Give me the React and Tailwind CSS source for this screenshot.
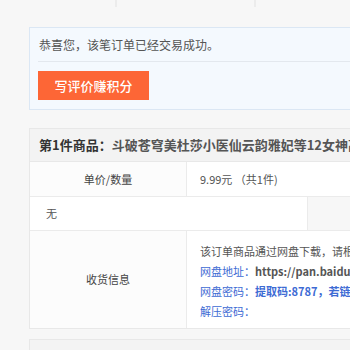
export default function App() {
  const font = { fontFamily: '"Microsoft YaHei", "Noto Sans CJK SC", "Noto Sans", sans-serif' };
  return (
    <div className="w-[350px] h-[350px] overflow-hidden bg-[#f7f7f7] text-[#555]" style={font}>
      <div className="flex h-[7px]">
        <div className="w-[117px] border-r-2 border-[#ececec]" />
        <div className="w-[139px] border-r-2 border-[#ececec]" />
      </div>
      <div className="pl-[29px]">
        <div className="mt-[20px] w-[360px] border border-[#dbe7f4] bg-[#f4f9fe] px-[8px] pb-[9px]">
          <div className="h-[34px] flex items-center pl-[1px] border-b border-[#e3e8ee] text-[12px] text-[#555]">
            恭喜您，该笔订单已经交易成功。
          </div>
          <div className="mt-[9px] w-[111px] h-[29px] bg-[#fd6636] text-white text-[13px] font-medium flex items-center justify-center">
            写评价赚积分
          </div>
        </div>

        <div className="mt-[18px] w-[360px] border border-[#e8e8e8] bg-[#f7f7f7]">
          <div className="h-[33px] bg-[#f3f3f3] border-b border-[#e8e8e8] flex items-center pl-[9px] text-[13px] font-bold whitespace-nowrap overflow-hidden">
            <span className="text-[#333]">第1件商品：</span>
            <span className="text-[#555]">斗破苍穹美杜莎小医仙云韵雅妃等12女神高清图集</span>
          </div>
          <div className="flex h-[35px] border-b border-[#ebebeb] text-[11px]">
            <div className="w-[157px] bg-[#fcfcfc] border-r border-[#ebebeb] flex items-center justify-center text-[#444]">单价/数量</div>
            <div className="flex-1 bg-white flex items-center pl-[13px] text-[#555]">9.99元 （共1件)</div>
          </div>
          <div className="flex h-[34px] border-b border-[#ebebeb]">
            <div className="w-[278px] bg-white border-r border-[#ebebeb] flex items-center pl-[16px] text-[11px] text-[#555]">无</div>
            <div className="flex-1 bg-[#f7f7f7]" />
          </div>
          <div className="flex h-[97px] text-[11px]">
            <div className="w-[157px] bg-[#fcfcfc] border-r border-[#ebebeb] flex items-center justify-center text-[#444]">收货信息</div>
            <div className="flex-1 bg-white pl-[13px] pt-[10px] leading-[20px] whitespace-nowrap overflow-hidden">
              <div className="text-[#555]">该订单商品通过网盘下载，请根据以下信息获取</div>
              <div>
                <span className="text-[#3d6bd4]">网盘地址：</span>
                <span className="font-bold text-[#555]">https://pan.baidu.com/s/1abc</span>
              </div>
              <div>
                <span className="text-[#3d6bd4]">网盘密码：</span>
                <span className="font-bold text-[#3d6bd4]">提取码:8787，若链接失效请联系客服</span>
              </div>
              <div className="text-[#3d6bd4]">解压密码：</div>
            </div>
          </div>
        </div>

        <div className="mt-[10px] w-[360px] h-[40px] border border-[#e8e8e8] bg-[#f3f3f3]" />
      </div>
    </div>
  );
}
